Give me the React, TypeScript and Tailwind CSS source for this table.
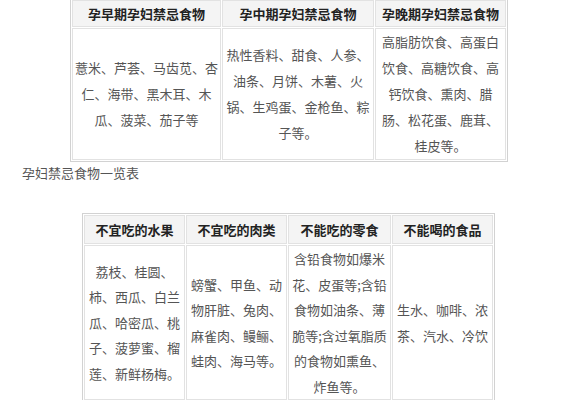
import React from "react";

const font = { fontFamily: '"Noto Sans CJK SC", "Noto Sans", sans-serif' };

const topHeads = ["孕早期孕妇禁忌食物", "孕中期孕妇禁忌食物", "孕晚期孕妇禁忌食物"];
const topCells = [
  ["薏米、芦荟、马齿苋、杏", "仁、海带、黑木耳、木", "瓜、菠菜、茄子等"],
  ["热性香料、甜食、人参、", "油条、月饼、木薯、火", "锅、生鸡蛋、金枪鱼、粽", "子等。"],
  ["高脂肪饮食、高蛋白", "饮食、高糖饮食、高", "钙饮食、熏肉、腊", "肠、松花蛋、鹿茸、", "桂皮等。"],
];
const topWidths = ["w-[149px]", "w-[152px]", "w-[131px]"];

const bottomHeads = ["不宜吃的水果", "不宜吃的肉类", "不能吃的零食", "不能喝的食品"];
const bottomCells = [
  ["荔枝、桂圆、", "柿、西瓜、白兰", "瓜、哈密瓜、桃", "子、菠萝蜜、榴", "莲、新鲜杨梅。"],
  ["螃蟹、甲鱼、动", "物肝脏、兔肉、", "麻雀肉、鳗鲡、", "蛙肉、海马等。"],
  ["含铅食物如爆米", "花、皮蛋等;含铅", "食物如油条、薄", "脆等;含过氧脂质", "的食物如熏鱼、", "炸鱼等。"],
  ["生水、咖啡、浓", "茶、汽水、冷饮"],
];
const bottomWidths = ["w-[101px]", "w-[101px]", "w-[103px]", "w-[101px]"];

export default function App() {
  return (
    <div className="w-[578px] h-[400px] overflow-hidden bg-white" style={font}>
      <table className="ml-[70px] -mt-[2px] border-separate border-spacing-[1px] border border-[#d2d2d2] table-fixed">
        <thead>
          <tr>
            {topHeads.map((h, i) => (
              <th
                key={h}
                className={`${topWidths[i]} h-[27px] border border-[#e2e2e2] bg-[#f4f4f4] text-[13px] font-bold text-[#222] text-center p-0`}
              >
                {h}
              </th>
            ))}
          </tr>
        </thead>
        <tbody>
          <tr>
            {topCells.map((lines, i) => (
              <td
                key={i}
                className="h-[131px] border border-[#e2e2e2] text-center align-middle p-0 text-[13px] leading-[26px] text-[#555]"
              >
                {lines.map((l) => (
                  <span key={l} className="block whitespace-nowrap">
                    {l}
                  </span>
                ))}
              </td>
            ))}
          </tr>
        </tbody>
      </table>

      <p className="ml-[22px] mt-[1px] text-[13px] leading-[20px] text-[#555]">孕妇禁忌食物一览表</p>

      <table className="ml-[82px] mt-[30px] border-separate border-spacing-[1px] border border-[#d2d2d2] table-fixed">
        <thead>
          <tr>
            {bottomHeads.map((h, i) => (
              <th
                key={h}
                className={`${bottomWidths[i]} h-[29px] border border-[#e2e2e2] bg-[#f4f4f4] text-[13px] font-bold text-[#222] text-center p-0`}
              >
                {h}
              </th>
            ))}
          </tr>
        </thead>
        <tbody>
          <tr>
            {bottomCells.map((lines, i) => (
              <td
                key={i}
                className="h-[152px] border border-[#e2e2e2] text-center align-middle p-0 text-[13px] leading-[25.5px] text-[#555]"
              >
                {lines.map((l) => (
                  <span key={l} className="block whitespace-nowrap">
                    {l}
                  </span>
                ))}
              </td>
            ))}
          </tr>
        </tbody>
      </table>
    </div>
  );
}
